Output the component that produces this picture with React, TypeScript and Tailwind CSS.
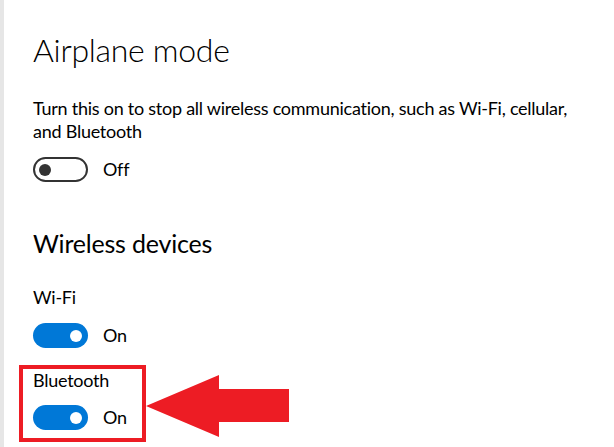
import React from "react";

const font = { fontFamily: 'Lato, "Noto Sans", sans-serif' };

const Toggle = ({ on }: { on: boolean }) =>
    on ? (
        <div className="flex h-[25px] w-[55px] items-center justify-end rounded-full bg-[#0078d7] pr-[6px]">
            <div className="h-[12px] w-[12px] rounded-full bg-white" />
        </div>
    ) : (
        <div className="flex h-[25px] w-[55px] items-center rounded-full border-[2px] border-[#333333] pl-[4px]">
            <div className="h-[12px] w-[12px] rounded-full bg-[#333333]" />
        </div>
    );

const ToggleRow = ({ on }: { on: boolean }) => (
    <div className="flex items-center gap-[15px]">
        <Toggle on={on} />
        <span className="text-[18px] leading-[23px] tracking-[-0.25px] text-black">{on ? "On" : "Off"}</span>
    </div>
);

export default function App() {
    return (
        <div className="relative flex h-[447px] w-[614px] overflow-hidden bg-white" style={font}>
            <div className="w-[4px] shrink-0 bg-[#e6e6e6]" />
            <div className="flex flex-col pl-[29px] pt-[28px] text-black">
                <h1 className="text-[32px] leading-[44px] font-light tracking-[-0.3px]">Airplane mode</h1>
                <p className="mt-[25px] w-[560px] text-[18px] leading-[23px] tracking-[-0.25px]">
                    Turn this on to stop all wireless communication, such as Wi-Fi, cellular, and Bluetooth
                </p>
                <div className="mt-[14px]">
                    <ToggleRow on={false} />
                </div>
                <h2 className="mt-[45px] text-[25px] leading-[32px] tracking-[-0.2px]">Wireless devices</h2>
                <div className="mt-[27px] text-[18px] leading-[23px] tracking-[-0.25px]">Wi-Fi</div>
                <div className="mt-[14px]">
                    <ToggleRow on={true} />
                </div>
                <div className="relative mt-[21px]">
                    <div className="text-[18px] leading-[23px] tracking-[-0.25px]">Bluetooth</div>
                    <div className="mt-[13px]">
                        <ToggleRow on={true} />
                    </div>
                    <div className="absolute left-[-14px] top-[-4px] h-[77px] w-[127px] border-[4px] border-[#ed1c24]" />
                </div>
            </div>
            <svg className="absolute left-[144px] top-[372px]" width="150" height="70" viewBox="0 0 150 70">
                <polygon points="2,34 75,3 75,17 145,17 145,50 75,50 75,65" fill="#ed1c24" />
            </svg>
        </div>
    );
}
